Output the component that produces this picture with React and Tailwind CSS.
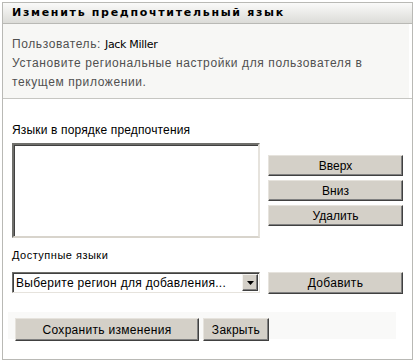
import React from "react";

const btn =
  "flex items-center justify-center bg-[#d4d0c8] text-black text-[12px] border-t border-l border-t-[#e6e3dd] border-l-[#e6e3dd] border-r border-b border-r-[#404040] border-b-[#404040] shadow-[inset_-1px_-1px_0_#808080]";

export default function App() {
  return (
    <div className="w-[417px] h-[361px] bg-white pt-[2px] pl-[2px]" style={{ fontFamily: "Tahoma, 'DejaVu Sans', 'Liberation Sans', sans-serif" }}>
      <div className="w-[411px] h-[358px] border border-[#b9b9b5] flex flex-col">
        {/* header */}
        <div className="h-[21px] border-b border-[#b9b9b5] bg-gradient-to-b from-[#fafaf9] to-[#dcdcd8] flex items-center pl-[9px]">
          <span className="text-[11px] font-bold tracking-[1.7px] text-black" style={{ fontFamily: "'DejaVu Sans', sans-serif" }}>
            Изменить предпочтительный язык
          </span>
        </div>
        {/* info */}
        <div className="border-b border-[#c6c6c2]">
          <div className="bg-[#f7f7f5] mr-[3px] h-[74px] pl-[9px] pt-[11px] text-[12px] leading-[19px] text-[#505050] tracking-[0.6px]" style={{ fontFamily: "'Liberation Sans', Arial, sans-serif" }}>
            <div>
              Пользователь: <span className="text-black tracking-normal text-[11px]" style={{ fontFamily: "'DejaVu Sans', sans-serif", letterSpacing: "-0.3px" }}>Jack Miller</span>
            </div>
            <div>Установите региональные настройки для пользователя в</div>
            <div>текущем приложении.</div>
          </div>
        </div>
        {/* content */}
        <div className="pl-[9px] pt-[24px] text-[11px] text-black" style={{ fontFamily: "'Liberation Sans', Arial, sans-serif" }}>
          <div className="leading-[14px] tracking-[0.15px] text-[12px]">Языки в порядке предпочтения</div>
          <div className="flex mt-[6px]">
            <div className="w-[248px] h-[95px] bg-white border-t-2 border-l-2 border-t-[#6f6f6b] border-l-[#6f6f6b] border-b-2 border-r-2 border-b-[#d8d4cc] border-r-[#e6e3dd] shadow-[inset_1px_1px_0_#404040]" />
            <div className="ml-[8px] mt-[12px] flex flex-col gap-[4px]">
              <div className={btn + " w-[135px] h-[21px]"}>Вверх</div>
              <div className={btn + " w-[135px] h-[21px]"}>Вниз</div>
              <div className={btn + " w-[135px] h-[21px]"}>Удалить</div>
            </div>
          </div>
          <div className="mt-[10px] leading-[14px] tracking-[0.5px] text-[11px]">Доступные языки</div>
          <div className="flex mt-[10px] items-start">
            <div className="w-[248px] h-[21px] bg-white border-t border-l border-t-[#6f6f6b] border-l-[#6f6f6b] border-b border-r border-b-[#e6e3dd] border-r-[#e6e3dd] shadow-[inset_1px_1px_0_#404040] flex items-center">
              <span className="flex-1 pl-[3px] text-[12px] tracking-[0.3px]">Выберите регион для добавления...</span>
              <div className="w-[16px] h-[17px] mr-[1px] bg-[#d4d0c8] border-t border-l border-[#f4f3ef] border-r border-b border-r-[#404040] border-b-[#404040] shadow-[inset_-1px_-1px_0_#808080] flex items-center justify-center">
                <svg width="7" height="4" viewBox="0 0 7 4"><path d="M0 0h7L3.5 4z" fill="#000" /></svg>
              </div>
            </div>
            <div className={btn + " ml-[8px] w-[135px] h-[22px] tracking-[0.3px]"}>Добавить</div>
          </div>
          <div className="mt-[18px] mr-[16px] -ml-[4px] h-[27px] bg-[#f9f9f8] flex items-start pt-[6px] pl-[7px] gap-[4px]">
            <div className={btn + " w-[184px] h-[23px] tracking-[0.3px]"}>Сохранить изменения</div>
            <div className={btn + " w-[66px] h-[23px] tracking-[0.3px]"}>Закрыть</div>
          </div>
        </div>
      </div>
    </div>
  );
}
